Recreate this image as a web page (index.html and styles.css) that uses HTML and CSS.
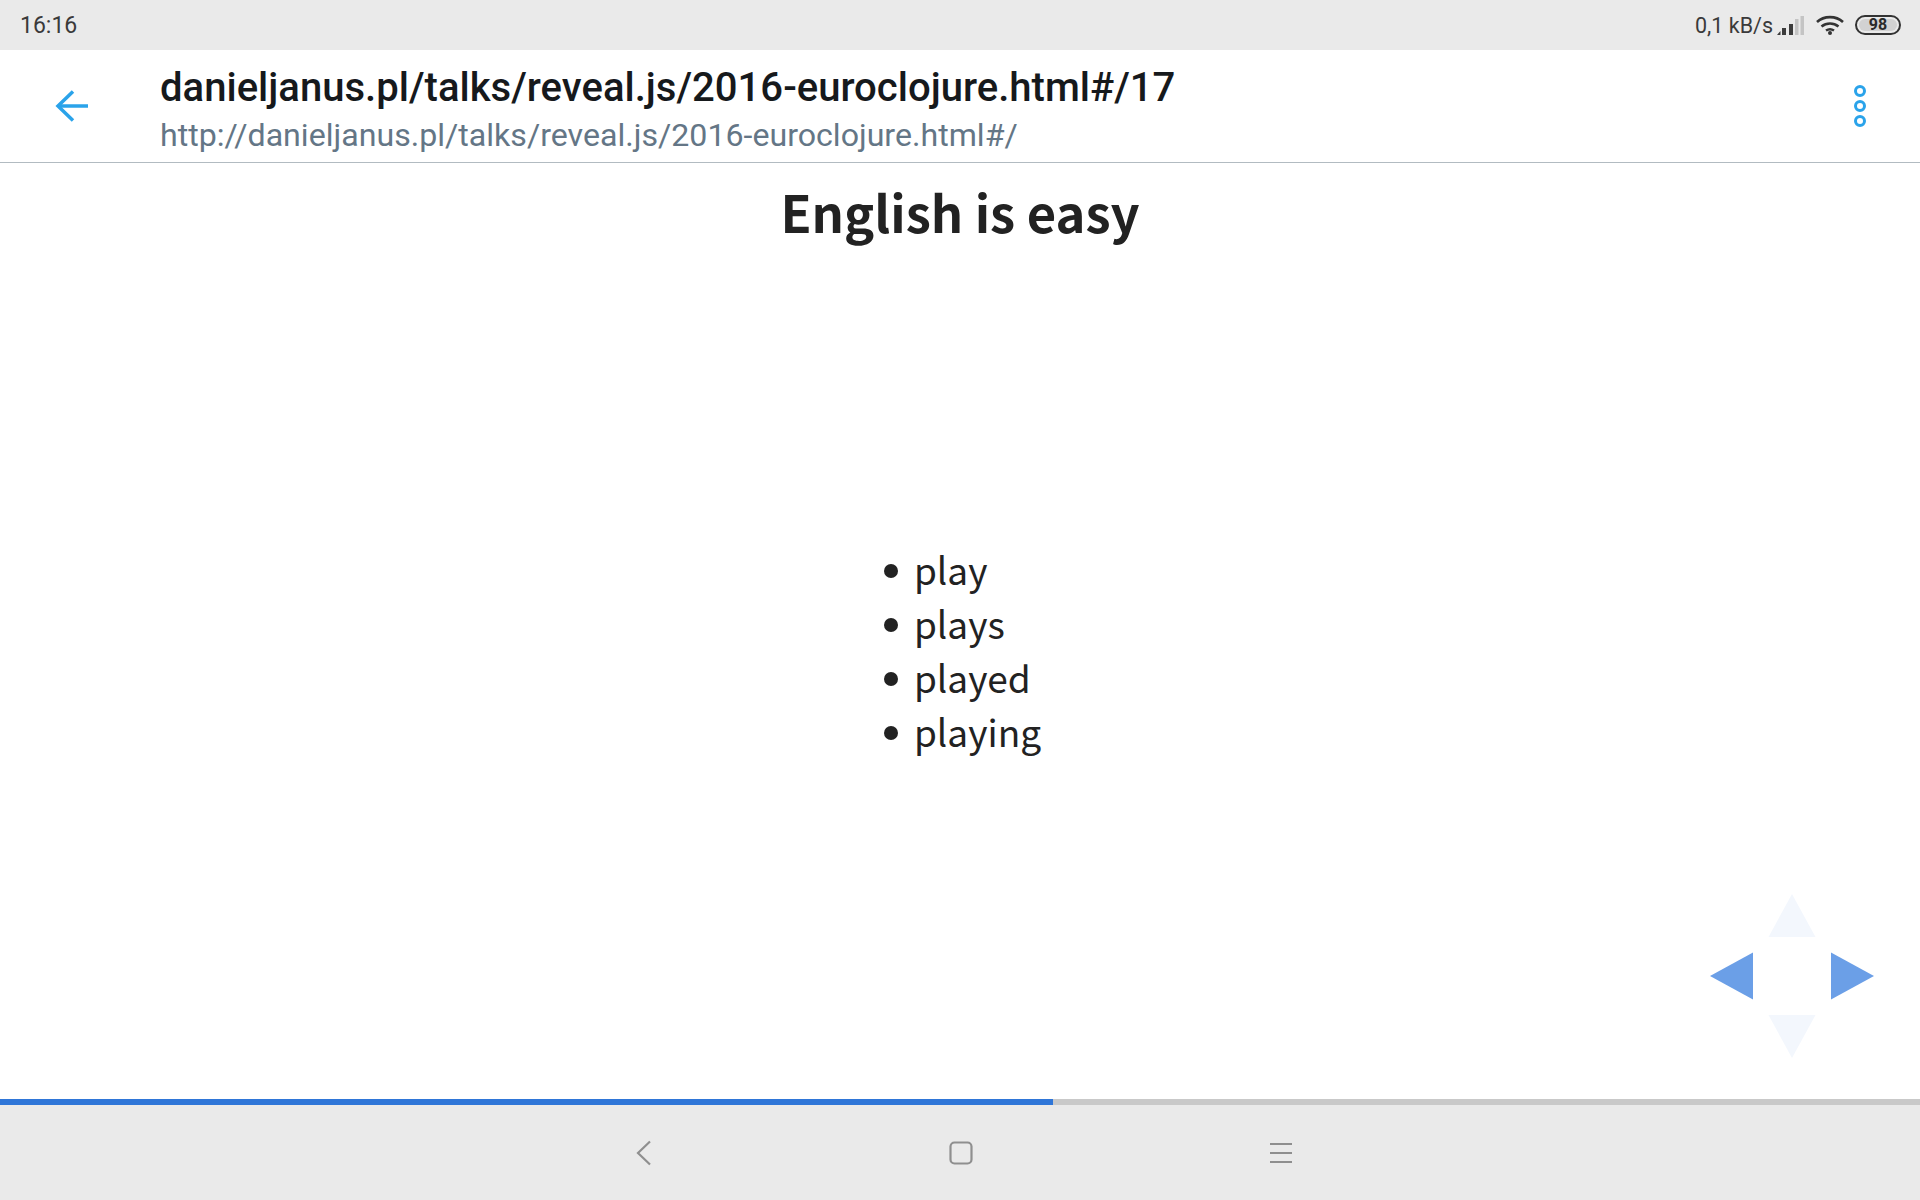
FILE: index.html
```html
<!DOCTYPE html>
<html lang="en">
<head>
<meta charset="utf-8">
<title>English is easy</title>
<link rel="stylesheet" href="styles.css">
</head>
<body>
<div class="app">
  <div class="status">
    <span class="clock">16:16</span>
    <div class="status-right">
      <span class="speed">0,1 kB/s</span>
      <svg class="signal" width="27" height="19" viewBox="0 0 27 19"><path d="M0 19L3.500 15V19Z" fill="#3c3c3c"/><rect x="5" y="12" width="4" height="7" fill="#3c3c3c"/><rect x="12" y="8" width="4" height="11" fill="#3c3c3c"/><rect x="18" y="3" width="3.500" height="16" fill="#c4c4c4"/><rect x="23.500" y="0" width="3.500" height="19" fill="#c4c4c4"/></svg>
      <svg class="wifi" width="28" height="20" viewBox="0 0 28 20" fill="none" stroke="#333" stroke-width="2.600"><path d="M1 7C8 0.500 20 0.500 27 7"/><path d="M5.500 11.500C10.500 7.500 17.500 7.500 22.500 11.500"/><path d="M10 15.500C12.300 14 15.700 14 18 15.500"/><circle cx="14" cy="18" r="2" fill="#333" stroke="none"/></svg>
      <span class="battery"><span class="battery-level">98</span></span>
    </div>
  </div>
  <header class="bar">
    <svg class="back" width="36" height="36" viewBox="0 0 36 36" fill="none" stroke="#2aa3ea" stroke-width="3.500"><path d="M5 18H34"/><path d="M19 3.500L4 18L19 32.500"/></svg>
    <div class="titles">
      <div class="page-title">danieljanus.pl/talks/reveal.js/2016-euroclojure.html#/17</div>
      <div class="page-url">http://danieljanus.pl/talks/reveal.js/2016-euroclojure.html#/</div>
    </div>
    <div class="menu"><i></i><i></i><i></i></div>
  </header>
  <main class="slide">
    <h1>English is easy</h1>
    <div class="slide-body">
      <ul>
        <li>play</li>
        <li>plays</li>
        <li>played</li>
        <li>playing</li>
      </ul>
    </div>
    <svg class="controls" width="164" height="164" viewBox="0 0 164 164">
      <path class="off" d="M82 0L105.500 43H58.500Z"/>
      <path class="off" d="M82 164L105.500 121H58.500Z"/>
      <path class="on" d="M0 82L43 58.500V105.500Z"/>
      <path class="on" d="M164 82L121 58.500V105.500Z"/>
    </svg>
  </main>
  <div class="progress"><div class="progress-fill"></div></div>
  <nav class="nav">
    <svg width="20" height="28" viewBox="0 0 20 28" fill="none" stroke="#8f8f8f" stroke-width="2.200"><path d="M16 2.500L4 14L16 25.500"/></svg>
    <svg width="24" height="24" viewBox="0 0 24 24" fill="none" stroke="#8f8f8f" stroke-width="2.200"><rect x="1.500" y="1.500" width="21" height="21" rx="4"/></svg>
    <svg width="24" height="24" viewBox="0 0 24 24" fill="none" stroke="#8f8f8f" stroke-width="2"><path d="M1 3H23M1 12H23M1 21H23"/></svg>
  </nav>
</div>
</body>
</html>
```
FILE: styles.css
```css
* { box-sizing: border-box; }
html, body { margin: 0; height: 100%; background: #fff; }
.app { width: 1920px; height: 1200px; display: flex; flex-direction: column; overflow: hidden; font-family: Roboto, sans-serif; }
.status { height: 50px; flex: none; background: #eaeaea; display: flex; align-items: center; justify-content: space-between; padding: 0 19px 0 20px; color: #3a3a3a; font-size: 22px; }
.clock { font-size: 23px; }
.status-right { display: flex; align-items: center; }
.speed { font-size: 21.500px; margin-right: 4px; }
.signal { margin-right: 12px; }
.wifi { margin-right: 11px; }
.battery { width: 46px; height: 20px; border: 2px solid #333; border-radius: 10px; padding: 2px; display: flex; }
.battery-level { flex: 1; background: #d2d2d2; border-radius: 6px; font-size: 16px; font-weight: 700; line-height: 12px; text-align: center; color: #2a2a2a; }
.bar { height: 113px; flex: none; background: #fff; border-bottom: 1.500px solid #b2bbc1; display: flex; align-items: center; padding: 0 54px 0 54px; }
.back { flex: none; margin-right: 70px; }
.titles { flex: 1; display: flex; flex-direction: column; padding-top: 8px; }
.page-title { font-size: 40.050px; font-weight: 500; line-height: 50px; color: #16191c; }
.page-url { font-size: 32.140px; line-height: 44px; color: #647686; }
.menu { display: flex; flex-direction: column; gap: 3px; }
.menu i { width: 12px; height: 12px; border: 3px solid #2aa3ea; border-radius: 50%; display: block; }
.slide { flex: 1; position: relative; display: flex; flex-direction: column; align-items: center; font-family: "Noto Sans CJK JP", sans-serif; color: #222; }
.slide h1 { margin: 12px 0 0; font-size: 50.700px; line-height: 72px; font-weight: 700; }
.slide-body { flex: 1; display: flex; align-items: center; padding-bottom: 46px; }
.slide ul { margin: 0; padding: 0 0 0 35px; list-style: none; }
.slide li { font-size: 37px; line-height: 54px; position: relative; }
.slide li::before { content: ""; position: absolute; left: -30px; top: 22px; width: 14px; height: 14px; border-radius: 50%; background: #222; }
.controls { position: absolute; right: 46px; bottom: 41px; }
.controls .on { fill: #6b9fe7; }
.controls .off { fill: #f3f7fd; }
.progress { height: 6px; flex: none; background: #c9c9c9; }
.progress-fill { width: 1053px; height: 100%; background: #2f76d8; }
.nav { height: 95px; flex: none; background: #eaeaea; display: flex; align-items: center; justify-content: center; gap: 295.500px; padding-left: 6px; }
.nav svg { flex: none; }
```
